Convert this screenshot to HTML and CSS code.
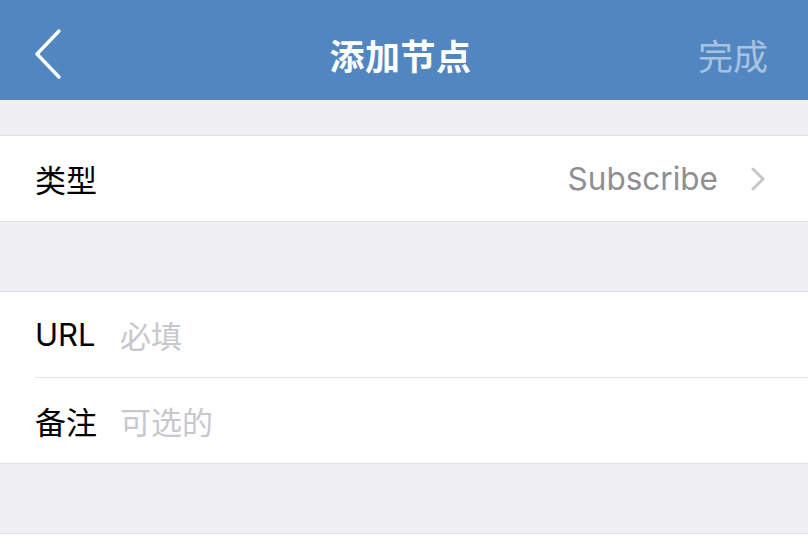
FILE: index.html
```html
<!DOCTYPE html>
<html lang="zh">
<head>
<meta charset="utf-8">
<link rel="stylesheet" href="styles.css">
</head>
<body>
<header class="nav">
  <div class="nav-left">
    <svg class="back" width="30" height="52" viewBox="0 0 30 52"><path d="M26 3 L4 26 L26 49" fill="none" stroke="#fff" stroke-width="3.4" stroke-linecap="round" stroke-linejoin="round"/></svg>
  </div>
  <div class="nav-title">添加节点</div>
  <div class="nav-right">完成</div>
</header>
<div class="gap g1"></div>
<section class="group">
  <div class="row">
    <span class="label">类型</span>
    <span class="value">Subscribe</span>
    <svg class="chev" width="16" height="26" viewBox="0 0 16 26"><path d="M3 3 L13 13 L3 23" fill="none" stroke="#C7C7CC" stroke-width="3" stroke-linecap="round" stroke-linejoin="round"/></svg>
  </div>
</section>
<div class="gap g2"></div>
<section class="group">
  <div class="row field">
    <span class="label fixed">URL</span>
    <span class="placeholder">必填</span>
  </div>
  <div class="row field">
    <span class="label fixed">备注</span>
    <span class="placeholder">可选的</span>
  </div>
</section>
<div class="gap g3"></div>
<section class="group tail"></section>
</body>
</html>
```
FILE: styles.css
```css
html, body {
  margin: 0;
  padding: 0;
  background: #F0EFF4;
  font-family: Inter, "Noto Sans CJK SC", sans-serif;
  width: 808px;
  height: 548px;
  overflow: hidden;
}
.nav {
  height: 100px;
  background: #5286C0;
  display: flex;
  align-items: center;
  justify-content: space-between;
  padding: 8px 40px 0 33px;
  box-sizing: border-box;
}
.nav-left {
  width: 120px;
  display: flex;
  align-items: center;
}
.back { display: block; margin-top: 0; }
.nav-title {
  color: #fff;
  font-weight: 600;
  font-size: 35px;
  font-family: "Noto Sans CJK SC", sans-serif;
  letter-spacing: 0.5px;
}
.nav-right {
  width: 120px;
  text-align: right;
  color: #A9C2E0;
  font-size: 35px;
  font-family: "Noto Sans CJK SC", sans-serif;
}
.gap.g1 { height: 35px; }
.gap.g2 { height: 69px; }
.gap.g3 { height: 69px; }
.group {
  background: #fff;
  border-top: 1px solid #E0E0E5;
  border-bottom: 1px solid #E0E0E5;
}
.group.tail { height: 20px; border-bottom: none; }
.row {
  height: 85px;
  display: flex;
  align-items: center;
  padding: 0 42px 0 35px;
  font-size: 31px;
  color: #000;
}
.field + .field {
  border-top: 1px solid #E3E3E7;
  margin-left: 35px;
  padding-left: 0;
}
.label { flex: none; }
.label.fixed { width: 85px; }
.value {
  margin-left: auto;
  color: #8E8E93;
  margin-right: 32px;
  font-size: 31.5px;
}
.chev { display: block; }
.placeholder { color: #C7C7CD; }
```
